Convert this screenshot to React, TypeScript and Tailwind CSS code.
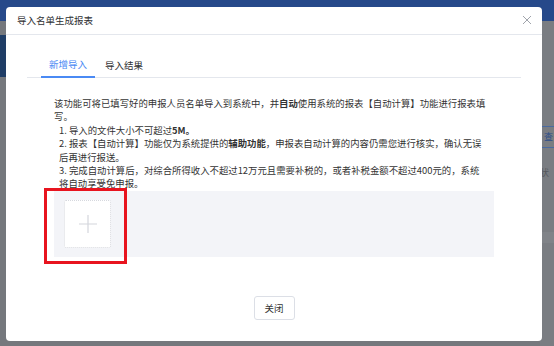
import React from "react";

export default function App() {
  const font = { fontFamily: '"Noto Sans CJK SC", "Noto Sans", sans-serif' };
  return (
    <div className="relative w-[554px] h-[346px] overflow-hidden bg-[#75787d]" style={font}>
      {/* background page (dimmed) */}
      <div className="flex flex-col h-full">
        <div className="h-[21px] bg-[#26498a]" />
        <div className="flex flex-1">
          <div className="w-[16px] flex flex-col">
            <div className="h-[14px] bg-[#75787d]" />
            <div className="h-[42px] bg-[#1f3d66]" />
            <div className="flex-1 bg-[#75787d]" />
          </div>
          <div className="flex-1" />
          <div className="w-[14px] flex flex-col bg-[#7a7d82]">
            <div className="h-[105px] shrink-0" />
            <div className="h-[22px] shrink-0 border-y border-[#4a6aa0] text-[9px] text-[#2c4e8a] leading-[20px] pl-[4px]">查</div>
            <div className="h-[15px] shrink-0" />
            <div className="h-[20px] shrink-0 text-[9px] text-[#55585d] leading-[20px]">状</div>
            <div className="h-[49px] shrink-0" />
            <div className="h-[11px] shrink-0 bg-[#808388]" />
            <div className="flex-1" />
          </div>
        </div>
      </div>

      {/* modal */}
      <div className="absolute left-[6px] top-[7px] w-[536px] h-[334px] bg-white rounded-[4px] flex flex-col">
        <div className="h-[28px] flex items-center justify-between pl-[11px] pr-[10px] border-b border-[#e4e7ed]">
          <span className="text-[9.5px] text-[#303133]">导入名单生成报表</span>
          <svg width="10" height="10" viewBox="0 0 10 10" className="mt-[-1px]">
            <path d="M1 1 L9 9 M9 1 L1 9" stroke="#a0a4ab" strokeWidth="1" fill="none" />
          </svg>
        </div>

        <div className="px-[21px] pt-[18px] flex flex-col">
          <div className="flex h-[25px] border-b border-[#e4e7ed] pl-[14px] gap-[2px]">
            <div className="px-[8px] flex items-center text-[9.5px] text-[#4a8af4] border-b-2 border-[#4a8af4] mb-[-1px]">
              新增导入
            </div>
            <div className="px-[8px] flex items-center text-[9.5px] text-[#303133]">导入结果</div>
          </div>

          <div className="px-[27px] pt-[19px] flex flex-col">
            <div className="w-[440px] text-[9.4px] leading-[13.4px] text-[#333] whitespace-nowrap">
              <p>
                该功能可将已填写好的申报人员名单导入到系统中，并<b className="font-bold">自动</b>使用系统的报表【自动计算】功能进行报表填
                <br />写。
              </p>
              <p className="pl-[5px]">
                1. 导入的文件大小不可超过<b className="font-bold">5M。</b>
              </p>
              <p className="pl-[5px]">
                2. 报表【自动计算】功能仅为系统提供的<b className="font-bold">辅助功能</b>，申报表自动计算的内容仍需您进行核实，确认无误
                <br />后再进行报送。
              </p>
              <p className="pl-[5px]">
                3. 完成自动计算后，对综合所得收入不超过12万元且需要补税的，或者补税金额不超过400元的，系统
                <br />将自动享受免申报。
              </p>
            </div>

            <div className="relative w-[440px] h-[66px] bg-[#f3f4f8] pl-[10px] pt-[9px]">
              <div className="w-[47px] h-[48px] bg-white border border-dotted border-[#d6d8de] rounded-[2px] flex items-center justify-center">
                <svg width="20" height="20" viewBox="0 0 20 20">
                  <path d="M10 1 V19 M1 10 H19" stroke="#d4d6dc" strokeWidth="1.2" fill="none" />
                </svg>
              </div>
              <div className="absolute left-[-10px] top-[-3px] w-[83px] h-[76px] border-[3px] border-[#e8141f]" />
            </div>

            <div className="flex justify-center pt-[39px]">
              <button className="h-[24px] w-[41px] border border-[#dcdfe6] rounded-[3px] bg-white text-[9.5px] text-[#333] flex items-center justify-center">
                关闭
              </button>
            </div>
          </div>
        </div>
      </div>
    </div>
  );
}
